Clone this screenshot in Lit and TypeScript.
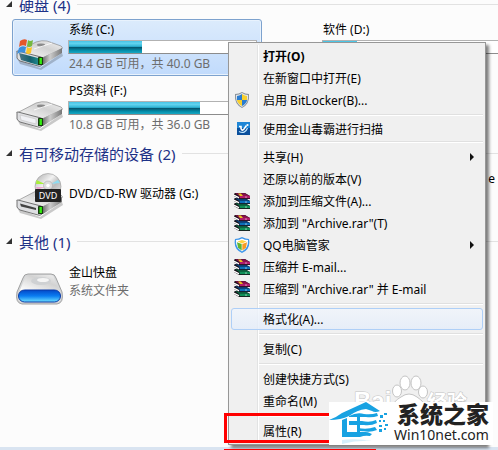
import { LitElement, html, css, svg, nothing } from "lit";
import { customElement, property } from "lit/decorators.js";

const driveBody = svg`
  <path d="M2 36 L24 44 L46 29 L47 32 L25 46 L4 40Z" fill="#000" opacity=".2"/>
  <path d="M1 28 L20 18 Q26 16 31 17 L45 22 Q47 23 46 25 L26 34Z" fill="url(#top)" stroke="#8d8d8d" stroke-width=".7"/>
  <path d="M26 34 L46 24 L46 29 L27 41Z" fill="url(#side)"/>
  <path d="M1 28 Q0 27 2 27 L25 33 Q28 34 27 36 L26 41 Q24 43 22 42 L4 37 Q2 36 1 34Z" fill="#dedfe2" stroke="#666" stroke-width=".9"/>
  <ellipse cx="25" cy="21" rx="4" ry="1.4" fill="#777" opacity=".8"/>
  <path d="M18 25 L36 19" stroke="#fff" opacity=".8"/>`;

const defs = svg`<defs>
  <linearGradient id="top" x1="0" y1="1" x2="1" y2="0"><stop offset="0" stop-color="#fff"/><stop offset=".6" stop-color="#d2d2d2"/><stop offset="1" stop-color="#f2f2f2"/></linearGradient>
  <linearGradient id="side" x1="0" y1="0" x2="1" y2="0"><stop offset="0" stop-color="#666"/><stop offset=".4" stop-color="#ccc"/><stop offset="1" stop-color="#777"/></linearGradient>
  <linearGradient id="teal" x1="0" y1="0" x2="1" y2="0"><stop offset="0" stop-color="#4d7786"/><stop offset=".6" stop-color="#14606e"/><stop offset="1" stop-color="#20888c"/></linearGradient>
  <linearGradient id="blue" x1="0" y1="0" x2="0" y2="1"><stop offset="0" stop-color="#0348c8"/><stop offset=".5" stop-color="#0a7df2"/><stop offset="1" stop-color="#6fe0ff"/></linearGradient>
  <linearGradient id="disc" x1="0" y1="0" x2="1" y2="1"><stop offset="0" stop-color="#aaa"/><stop offset=".4" stop-color="#f2f2f2"/><stop offset=".6" stop-color="#bbb"/><stop offset="1" stop-color="#eee"/></linearGradient>
</defs>`;

const led = svg`<rect x="22" y="33" width="5" height="8" rx=".6" fill="#183c10"/><rect x="23.500" y="34" width="2.400" height="6" fill="#35f010"/>`;

const bigIcons: Record<string, unknown> = {
  system: svg`${driveBody}
    <path d="M3 29 L22 34 L22 41 L5 36Z" fill="url(#teal)"/>${led}
    <path d="M4 17 Q8 14 11 16 L10 22 Q6 20 3 23Z" fill="#e4572a"/>
    <path d="M12 16 Q14 18 17 16 L16 22 Q13 24 11 22Z" fill="#76b83f"/>
    <path d="M3 24 Q6 21 10 23 L9 29 Q5 27 1 30Z" fill="#3c8edb"/>
    <path d="M11 23 Q13 25 16 23 L15 29 Q12 31 10 29Z" fill="#fbc529"/>`,
  drive: svg`${driveBody}<path d="M4 30 L20 34 L20 39 L5 35Z" fill="#f0f1f5" stroke="#bbb" stroke-width=".5"/>${led}`,
  dvd: svg`${driveBody}<path d="M4 30.500 L20 35 L20 37 L5 33.500Z" fill="#444"/>${led}
    <circle cx="32" cy="13.500" r="13" fill="url(#disc)" stroke="#999" stroke-width=".6"/>
    <path d="M29 11 L20.500 7 L20 11Z" fill="#a8f03a"/><path d="M29 14 L21 17 L20 14Z" fill="#f08fc8" opacity=".7"/><path d="M35 11 L42 7 L44 10Z" fill="#8fdcf0"/>
    <circle cx="32" cy="12.500" r="4.500" fill="#ddd" stroke="#aaa" stroke-width=".6"/><circle cx="32" cy="12.500" r="1.800" fill="#fff"/>
    <rect x="19" y="16" width="26" height="13" rx="1" fill="#222"/>
    <text x="32" y="26" text-anchor="middle" class="dvd">DVD</text>`,
  cloud: svg`<path d="M7 17 Q8 13 12 13 H35 Q39 13 40 17 L46 31 Q48 42 41 43 H6 Q-1 42 1 31Z" fill="#d5d7d9" stroke="#999" stroke-width=".9"/>
    <path d="M9 17 Q9 14 13 14 H34 Q38 14 38 17 L43 29 H4Z" fill="url(#top)"/>
    <ellipse cx="25" cy="20" rx="10" ry="4" fill="#cfd1d3"/><ellipse cx="27" cy="19" rx="6" ry="2" fill="#f5f5f5"/>
    <rect x="2.500" y="29" width="42" height="12" rx="6" fill="url(#blue)" stroke="#0b3ba8"/>`,
};

const book = (y: number, dark: string, cover: string) => svg`
  <path d="M0 ${y + 1} L1 ${y} H11 L16 ${y + 3} V${y + 6} H5 L0 ${y + 3}Z" fill="#181018"/>
  <path d="M1 ${y + .3} H11 L15.500 ${y + 3} H5Z" fill="${dark}"/>
  <path d="M5.500 ${y + 2.800} H16 V${y + 5.200} H5.500Z" fill="${cover}"/>
  <path d="M0 ${y + 1.500} L5 ${y + 4} V${y + 5.500} L0 ${y + 3}Z" fill="#fff"/>
  <path d="M11 ${y + 3.200} H13 V${y + 5} H11Z" fill="#fff" opacity=".3"/>`;

const rar = svg`${book(10, "#0c5c3c", "#109058")}${book(5, "#0c3c70", "#0c70b8")}${book(0, "#86104a", "#b01c6c")}
  <path d="M4 .5 H7 L9 3 H6Z" fill="#e8c020"/>`;

const smallIcons: Record<string, unknown> = {
  uac: svg`<path d="M8 0 Q11 2 15 2 Q16 12 8 16 Q0 12 1 2 Q5 2 8 0Z" fill="#8a929a"/>
    <path d="M8 1 Q11 3 14 3 Q15 11 8 15 Q1 11 2 3 Q5 3 8 1Z" fill="#e4e8ec"/>
    <path d="M8 2 Q5 4 3 4 L2.800 8 H8Z" fill="#2a7cd0"/><path d="M8 2 Q11 4 13 4 L13.200 8 H8Z" fill="#f8cf2c"/>
    <path d="M2.800 8 Q4 12 8 14 V8Z" fill="#f8cf2c"/><path d="M13.200 8 Q12 12 8 14 V8Z" fill="#2a7cd0"/>`,
  duba: svg`<rect x="3" y="2" width="13" height="13" fill="#0a4f9c"/><rect x="3" y="2" width="13" height="6" fill="#1f86d6"/>
    <path d="M5 6.500 H7 V8.500 Q8 11.500 10 9 L12.500 5.500" fill="none" stroke="#fff" stroke-width="1.600"/><path d="M5 11.500 Q11 14.500 13.500 8" fill="none" stroke="#bfe6ff" stroke-width="1.200"/><circle cx="13.500" cy="5" r="1.100" fill="#fff"/>`,
  rar,
  qq: svg`<path d="M8 0 Q12 2 15 2 Q17 12 8 16 Q-1 12 1 2 Q4 2 8 0Z" fill="#3d96ea"/><path d="M8 1.500 Q11 3 14 3 Q14.500 11 8 14.500 Q1.500 11 2 3 Q5 3 8 1.500Z" fill="#fff"/>
    <path d="M3.500 4.500 L8 3 L12.500 4.500 L8 6.500Z" fill="#ffd23c"/><path d="M3 5.200 L7.700 7 V13.500 L4 10.800Z" fill="#5cb531"/><path d="M13 5.200 L8.300 7 V13.500 L12 10.800Z" fill="#f79b22"/>`,
};

@customElement("drive-tile")
class DriveTile extends LitElement {
  @property() name = "";
  @property() icon = "";
  @property() detail = "";
  @property({ type: Number }) used = -1;
  @property({ type: Boolean, reflect: true }) selected = false;

  static styles = css`
    :host { display: flex; box-sizing: border-box; height: 57px; border: 1px solid transparent; border-radius: 3px; padding: 0 4px 0 3px; gap: 5px; align-items: center; }
    :host([selected]) { border-color: #7da2ce; background: linear-gradient(#dcebfc, #c1dbfc); box-shadow: inset 0 0 0 1px #e8f2fd; }
    svg { flex: none; width: 48px; height: 48px; }
    .dvd { font: 9px "Noto Sans", sans-serif; fill: #fff; }
    .text { flex: 1; min-width: 0; line-height: 18px; white-space: nowrap; padding-bottom: 5px; }
    .gauge { padding-bottom: 1px; }
    .detail { color: #6d6d6d; min-height: 18px; }
    .bar { box-sizing: border-box; height: 14px; border: 1px solid #b2b2b2; border-bottom-color: #8c8c8c; background: #fff; margin: 1px 0 1px -1px; }
    .fill { height: 100%; background: linear-gradient(#45c4e6, #62d3ee 20%, #2fb4d4 45%, #03546c 52%, #0590ac 80%, #18a8c4); }
  `;
  render() {
    const gauge = this.used >= 0;
    return html`
      <svg viewBox="0 0 48 48" aria-hidden="true">${defs}${bigIcons[this.icon] ?? nothing}</svg>
      <div class="text ${gauge ? "gauge" : ""}">
        <div>${this.name}</div>
        ${gauge ? html`<div class="bar"><div class="fill" style="width:${this.used}%"></div></div>` : nothing}
        ${gauge || this.detail ? html`<div class="detail">${this.detail}</div>` : nothing}
      </div>`;
  }
}

type Entry = { label: string; icon?: string; sub?: boolean; kind?: string } | null;
const entries: Entry[] = [
  { label: "打开(O)", kind: "bold" },
  { label: "在新窗口中打开(E)" },
  { label: "启用 BitLocker(B)...", icon: "uac" },
  null,
  { label: "使用金山毒霸进行扫描", icon: "duba", kind: "short" },
  null,
  { label: "共享(H)", sub: true },
  { label: "还原以前的版本(V)" },
  { label: "添加到压缩文件(A)...", icon: "rar" },
  { label: '添加到 "Archive.rar"(T)', icon: "rar" },
  { label: "QQ电脑管家", icon: "qq", sub: true },
  { label: "压缩并 E-mail...", icon: "rar" },
  { label: '压缩到 "Archive.rar" 并 E-mail', icon: "rar" },
  null,
  { label: "格式化(A)...", kind: "hot" },
  null,
  { label: "复制(C)" },
  null,
  { label: "创建快捷方式(S)" },
  { label: "重命名(M)" },
  null,
  { label: "属性(R)" },
];

@customElement("context-menu")
class ContextMenu extends LitElement {
  static styles = css`
    :host { display: block; box-sizing: border-box; border: 1px solid #979797; background: #f0f0f0; padding: 2px; box-shadow: 3px 3px 3px rgba(0, 0, 0, .5); }
    .menu { background: linear-gradient(90deg, transparent 26px, #e2e3e3 26px, #e2e3e3 27px, #fff 27px, #fff 28px, transparent 28px); }
    button { box-sizing: border-box; display: flex; align-items: center; width: 100%; height: 22px; border: 1px solid transparent; border-radius: 3px; background: none; padding: 0 8px 0 2px; font: inherit; color: #000; white-space: nowrap; }
    .bold { font-weight: 700; }
    .short { height: 19px; }
    .hot { border-color: #aecff7; background: linear-gradient(rgba(240, 245, 252, .8), rgba(228, 237, 250, .8)); }
    .icon { width: 17px; height: 17px; margin-right: 12px; flex: none; }
    .label { flex: 1; text-align: left; }
    .arrow { border: 4px solid transparent; border-left-color: #111; border-right: 0; }
    hr { margin: 3px 0 3px 28px; border: 0; border-top: 1px solid #e0e0e0; border-bottom: 1px solid #fff; }
  `;
  render() {
    return html`<div class="menu" role="menu">
      ${entries.map((e) => e === null ? html`<hr />` : html`
        <button role="menuitem" class=${e.kind ?? ""}>
          <svg class="icon" viewBox="0 0 17 17" aria-hidden="true">${e.icon ? smallIcons[e.icon] : nothing}</svg>
          <span class="label">${e.label}</span>
          ${e.sub ? html`<span class="arrow"></span>` : nothing}
        </button>`)}
    </div>`;
  }
}

@customElement("app-root")
class AppRoot extends LitElement {
  static styles = css`
    :host { display: block; position: relative; min-height: 100vh; overflow: hidden; background: #fcfcfc; color: #000; font: 12px "Noto Sans", "Noto Sans CJK SC", sans-serif; }
    main { display: flex; flex-direction: column; gap: 6px; margin-top: -6px; }
    h2 { display: flex; align-items: center; gap: 7px; height: 20px; margin: 0 0 5px; padding-left: 6px; font-size: 15px; font-weight: 400; color: #1e3287; white-space: nowrap; }
    h2::before { content: ""; border-left: 6px solid transparent; border-bottom: 6px solid #333; }
    h2::after { content: ""; flex: 1; height: 1px; background: #e2e2e2; }
    .tiles { display: grid; grid-template-columns: 250px 250px; gap: 4px; padding-left: 12px; }
    .wide { grid-column: 1; }
    .other { text-align: right; padding: 2px 21px 0 0; line-height: 18px; }
    context-menu { position: absolute; left: 228px; top: 42px; width: 258px; }
    footer { position: absolute; inset: auto 0 0; height: 3px; background: #d9e4f1; }
    .mark { position: absolute; left: 224px; top: 413px; width: 120px; height: 30px; box-sizing: border-box; border: 3px solid #f00; }
    .under { position: absolute; left: 224px; top: 449px; width: 152px; height: 1px; background: #f00; }
    .stamp { position: absolute; left: 353px; top: 374px; width: 116px; height: 40px; }
    .stamp text { font: 700 24px "Liberation Sans", sans-serif; fill: #fff; stroke: #c4c4c4; stroke-width: 1px; paint-order: stroke; }
    .stamp .cjk { font: 700 20px "Noto Sans CJK SC", sans-serif; }
    .logo { position: absolute; left: 329px; top: 402px; width: 164px; height: 43px; display: flex; gap: 3px; background: #fff; }
    .logo svg { width: 62px; height: 43px; flex: none; }
    .brand { display: flex; flex-direction: column; color: #222; white-space: nowrap; }
    .brand b { font-size: 23px; line-height: 25px; font-weight: 900; padding-left: 3px; }
    .brand span { font-size: 14px; line-height: 16px; }
  `;
  render() {
    return html`
      <main>
        <section>
          <h2>硬盘 (4)</h2>
          <div class="tiles">
            <drive-tile selected name="系统 (C:)" icon="system" used="39" detail="24.4 GB 可用，共 40.0 GB"></drive-tile>
            <drive-tile name="软件 (D:)" used="18"></drive-tile>
            <drive-tile class="wide" name="PS资料 (F:)" icon="drive" used="70" detail="10.8 GB 可用，共 36.0 GB"></drive-tile>
          </div>
        </section>
        <section>
          <h2>有可移动存储的设备 (2)</h2>
          <div class="tiles">
            <drive-tile name="DVD/CD-RW 驱动器 (G:)" icon="dvd"></drive-tile>
            <div class="other">e</div>
          </div>
        </section>
        <section>
          <h2>其他 (1)</h2>
          <div class="tiles"><drive-tile name="金山快盘" icon="cloud" detail="系统文件夹"></drive-tile></div>
        </section>
      </main>
      <footer></footer>
      <context-menu></context-menu>
      <svg class="stamp" viewBox="0 0 116 40" aria-hidden="true">
        <text x="1" y="35">Bai</text><text class="cjk" x="74" y="36">经验</text>
        <g fill="#fff" stroke="#c4c4c4"><ellipse cx="44" cy="17" rx="4.500" ry="6"/><ellipse cx="52" cy="9" rx="5" ry="7"/><ellipse cx="63" cy="9" rx="5" ry="7"/><ellipse cx="70" cy="18" rx="4.500" ry="6"/><path d="M38 36 Q40 27 48 23 Q56 17 64 23 Q72 28 74 36 Z"/></g>
      </svg>
      <div class="mark"></div>
      <div class="under"></div>
      <div class="logo">
        <svg viewBox="0 0 62 43" aria-hidden="true">
          <g fill="#18a2e2">
            <path d="M0 18 Q8 15 13 11 L37 0 L51 9 Q46 11 43 9 L37 7 Q28 8 20 14 Q12 18 0 18Z"/>
            <path d="M13 18 L18 16 V30 H30 Q38 29 43 32 L41 34 Q36 33 31 35 H13Z"/>
            <path d="M20 14 Q28 10 35 12 Q42 13 48 11 L49 14 Q43 16 37 15 H20Z"/>
            <path d="M20 19 H33 Q41 21 47 18 L48 21 Q42 24 35 23 H20Z"/>
            <path d="M29 26 Q38 28 46 25 L48 28 Q41 31 34 29 H29Z"/>
            <path d="M28 14 H31 V32 H28Z"/>
            <path d="M51 13 H54 V16 H51Z M55 11 H58 V13 H55Z M50 18 H52 V20 H50Z M54 18 H56 V20 H54Z M50 23 H53 V25 H50Z M56 22 H59 V24 H56Z M50 27 H53 V30 H50Z M55 26 H57 V28 H55Z"/>
          </g>
          <path d="M13 38 Q26 36 44 39 Q28 38 13 42Z" fill="#18a2e2" opacity=".18"/>
        </svg>
        <div class="brand"><b>系统之家</b><span>Win10net.com</span></div>
      </div>`;
  }
}
